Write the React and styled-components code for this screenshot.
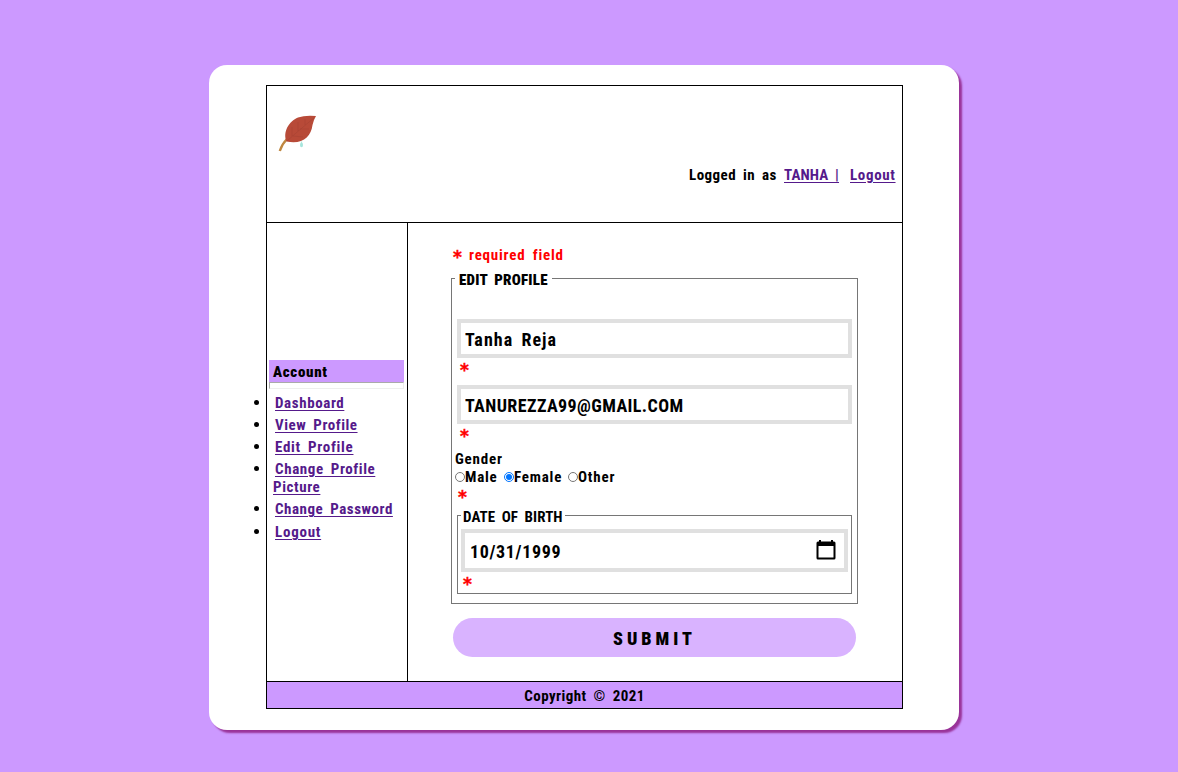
import React from 'react';
import styled, { createGlobalStyle } from 'styled-components';

const Global = createGlobalStyle`
  * { box-sizing: border-box; }
  body {
    margin: 0;
    background: #cc99ff;
    color: #000;
    font: bold 15px/18px "Roboto Condensed", Roboto, sans-serif;
  }
`;

const Page = styled.div`
  height: 772px;
  padding: 65px 0 0 209px;
`;

const Card = styled.main`
  width: 750px;
  height: 665px;
  padding: 20px 56px 21px 57px;
  background: #fff;
  border-radius: 18px;
  box-shadow: 3px 3px 2px #993399;
`;

const Frame = styled.div`
  width: 637px;
  height: 624px;
  display: grid;
  grid-template-columns: 140px 1fr;
  grid-template-rows: 137px 459px 26px;
  border: 1px solid #000;
`;

const Header = styled.header`
  grid-column: 1 / -1;
  display: flex;
  justify-content: space-between;
  padding: 27px 7px 0 11px;
  border-bottom: 1px solid #000;
`;

const Text = styled.span`
  display: inline-block;
  white-space: nowrap;
  letter-spacing: ${(p) => p.$ls ?? 0.8}px;
  word-spacing: ${(p) => p.$ws ?? 3}px;
  font-size: ${(p) => p.$size ?? 15}px;
  font-weight: ${(p) => p.$weight ?? 700};
`;

const Link = styled.a`
  color: #551a8b;
  text-decoration: underline;
  text-decoration-thickness: 1px;
  text-underline-offset: 2px;
  letter-spacing: ${(p) => p.$ls ?? 0.8}px;
  word-spacing: ${(p) => p.$ws ?? 3}px;
`;

const Session = styled.nav`
  display: flex;
  margin-top: 53px;
  white-space: pre;
`;

const Greeting = styled.div`
  width: 95px;
`;

const User = styled.div`
  width: 66px;
`;

const LogoutBox = styled.div`
  width: 45px;
`;

const Sidebar = styled.aside`
  padding: 137px 3px 0 2px;
  border-right: 1px solid #000;
  width: 141px;
`;

const Account = styled.div`
  height: 22px;
  padding: 3px 4px;
  background: #cc99ff;
`;

const Rule = styled.div`
  height: 7px;
  border: 1px solid #eee;
  border-top-color: #aaa;
  border-left-color: #aaa;
`;

const Menu = styled.ul`
  margin: 5px 0 0 -2px;
  padding: 0 0 0 4px;
  list-style: disc;
`;

const MenuItem = styled.li`
  margin-bottom: 4px;
  padding-left: 2px;
  text-indent: 2px;
  white-space: pre;

  &::marker {
    font-size: 16px;
  }

  &:last-child {
    margin-top: 5px;
  }
`;

const Main = styled.section`
  padding: 23px 44px 0 45px;
`;

const Required = styled.div`
  padding-left: 1px;
  color: #ff0000;
`;

const Profile = styled.fieldset`
  width: 407px;
  height: 335px;
  margin: 5px 0 0 -1px;
  padding: 0 5px 0 5px;
  border: 1px solid #767676;
`;

const Legend = styled.legend`
  height: 18px;
  margin-left: ${(p) => p.$shift ?? 0}px;
  padding: ${(p) => p.$top ?? 0}px ${(p) => p.$pad}px 0;
  width: ${(p) => p.$w}px;
`;

const Fields = styled.div`
  padding-top: 32px;
`;

const Input = styled.input`
  display: block;
  width: 395px;
  height: 39px;
  padding: 2px 4px 0;
  border: 4px solid #e0e0e0;
  color: #000;
  background: #fff;
  outline: none;
  font: bold 18px "Roboto Condensed", Roboto, sans-serif;
  letter-spacing: ${(p) => p.$ls}px;
  word-spacing: 3px;
`;

const Star = styled.div`
  height: ${(p) => p.$h}px;
  padding: ${(p) => p.$top ?? 3}px 0 0 ${(p) => p.$left ?? 3}px;
  color: #ff0000;
`;

const Asterisk = styled.span`
  font-family: "DejaVu Sans", sans-serif;
  font-size: 17px;
  line-height: 18px;
  display: inline-block;
  width: ${(p) => p.$w ?? 9}px;
  height: 18px;
  vertical-align: top;
  padding-top: ${(p) => p.$drop ?? 1}px;
  -webkit-text-stroke: 0.4px #ff0000;
`;

const Gender = styled.div`
  margin-left: -2px;
`;

const Options = styled.div`
  display: flex;
  height: 18px;
`;

const Option = styled.label`
  display: flex;
  width: ${(p) => p.$w}px;
`;

const Radio = styled.input`
  flex: none;
  width: 10px;
  height: 10px;
  margin: 4px 0 0;
`;

const Birth = styled.fieldset`
  width: 395px;
  height: 88px;
  margin: 0;
  padding: 0 3px;
  border: 1px solid #767676;
`;

const DateBox = styled.div`
  display: flex;
  justify-content: space-between;
  align-items: center;
  width: 387px;
  height: 43px;
  margin-top: 5px;
  padding: 0 8px 0 5px;
  border: 4px solid #e0e0e0;
`;

const DateValue = styled.div`
  padding-top: 3px;
`;

const Submit = styled.button`
  display: block;
  width: 403px;
  height: 39px;
  margin: 14px 0 0 1px;
  padding: 2px 0 0;
  border: 0;
  border-radius: 20px;
  background: #d9b3ff;
  color: #000;
  font: 900 18px "Roboto Condensed", Roboto, sans-serif;
`;

const Footer = styled.footer`
  grid-column: 1 / -1;
  padding-top: 5px;
  border-top: 1px solid #000;
  margin-top: -1px;
  background: #cc99ff;
  text-align: center;
`;

const Leaf = () => (
  <svg width="40" height="40" viewBox="0 0 40 40" fill="none">
    <path d="M1.800 38Q4 31 9 26" stroke="#bf8740" strokeWidth="2.400" />
    <path d="M38 3Q35.500 7 34.500 12C33 24 24 32 8.500 28.500C4.500 19 11 8 20 4.500Q27 2 38 3Z" fill="#b84a38" />
    <path d="M9 28Q20 18 36 5M14 23V14M20 18V9M15 23L25 24M22 16L31 16M27 12L27 6" stroke="#963b30" strokeWidth=".8" opacity=".4" />
    <path d="M23.500 28.500V31" stroke="#b5e9df" strokeWidth="1.300" />
    <ellipse cx="23.500" cy="32" rx="1.500" ry="2.300" fill="#a6e5dc" />
  </svg>
);

const Calendar = () => (
  <svg width="20" height="22" viewBox="0 1 20 22">
    <path d="M3 1v1.500H2Q.5 2.500 .5 4v15q0 1.500 1.500 1.500h16q1.500 0 1.500-1.500V4Q19.500 2.500 18 2.500h-1V1h-2v1.500H5V1Z M2.500 7h15v11.500h-15Z" fillRule="evenodd" />
  </svg>
);

const links = [
  { label: 'Dashboard', ls: 0.6 },
  { label: 'View Profile', ls: 0.55 },
  { label: 'Edit Profile', ls: 0.72 },
  { label: 'Change Profile\nPicture', ls: 0.6 },
  { label: 'Change Password', ls: 0.53 },
  { label: 'Logout', ls: 0.75 },
];

export default function App() {
  return (
    <>
      <Global />
      <Page>
        <Card>
          <Frame>
            <Header>
              <Leaf />
              <Session>
                <Greeting><Text $ls={0.45}>Logged in as</Text></Greeting>
                <User><Link $ls={0.15}>TANHA |</Link></User>
                <LogoutBox><Link $ls={0.65}>Logout</Link></LogoutBox>
              </Session>
            </Header>
            <Sidebar>
              <Account><Text $weight={900} $ls={0.7}>Account</Text></Account>
              <Rule />
              <Menu>
                {links.map((l) => <MenuItem key={l.label}><Link $ls={l.ls}>{l.label}</Link></MenuItem>)}
              </Menu>
            </Sidebar>
            <Main>
              <Required><Asterisk $w={16} $drop={2}>*</Asterisk><Text>required field</Text></Required>
              <Profile>
                <Legend $pad={4} $w={97} $shift={-2} $top={2}><Text $weight={900} $ls={0.22}>EDIT PROFILE</Text></Legend>
                <Fields>
                  <Input readOnly defaultValue="Tanha Reja" $ls={1.05} />
                  <Star $h={27} $top={2}><Asterisk>*</Asterisk></Star>
                  <Input readOnly defaultValue="TANUREZZA99@GMAIL.COM" $ls={0.4} />
                  <Star $h={26} $top={2}><Asterisk>*</Asterisk></Star>
                  <Gender><Text>Gender</Text></Gender>
                  <Gender>
                    <Options>
                      <Option $w={49}><Radio type="radio" name="gender" /><Text>Male</Text></Option>
                      <Option $w={64}><Radio type="radio" name="gender" defaultChecked /><Text>Female</Text></Option>
                      <Option $w={60}><Radio type="radio" name="gender" /><Text>Other</Text></Option>
                    </Options>
                  </Gender>
                  <Star $h={20} $top={0} $left={1}><Asterisk $drop={2}>*</Asterisk></Star>
                  <Birth>
                    <Legend $pad={2} $w={104} $top={2}><Text $ls={0.07}>DATE OF BIRTH</Text></Legend>
                    <DateBox><DateValue><Text $size={18} $ls={0.65}>10/31/1999</Text></DateValue><Calendar /></DateBox>
                    <Star $h={18} $top={1} $left={2}><Asterisk $drop={2}>*</Asterisk></Star>
                  </Birth>
                </Fields>
              </Profile>
              <Submit><Text $size={18} $ls={4} $weight={900}>SUBMIT</Text></Submit>
            </Main>
            <Footer><Text $ls={0.45}>Copyright © 2021</Text></Footer>
          </Frame>
        </Card>
      </Page>
    </>
  );
}
